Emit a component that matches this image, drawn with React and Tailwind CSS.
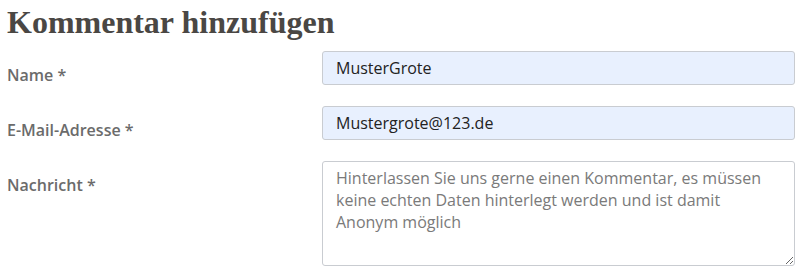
import {useState} from 'react';

const labelCls = "text-[16px] font-semibold text-[#6b6b6b] leading-none";
const fieldCls =
  "w-full rounded-[3px] border border-[#c9ccd1] px-[13px] text-[16px] text-[#222] outline-none";

const Field = ({label, children, top = false}) => (
  <div className={`flex ${top ? 'items-start' : 'items-center'}`}>
    <label className={`w-[322px] shrink-0 pl-[7px] ${labelCls} ${top ? 'pt-[16px]' : 'pt-[14px]'}`}>
      {label}
    </label>
    <div className="flex-1">{children}</div>
  </div>
);

const App = () => {
  const [name, setName] = useState('MusterGrote');
  const [mail, setMail] = useState('Mustergrote@123.de');

  return (
    <div className="w-[800px] h-[271px] bg-white pr-[5px] font-['Open_Sans',sans-serif]">
      <h2 className="pl-[7px] pt-[2px] text-[32px] font-bold leading-[40px] text-[#4a4744] font-['Liberation_Serif',serif]">
        Kommentar hinzufügen
      </h2>
      <div className="mt-[9px] flex flex-col gap-[21px]">
        <Field label="Name *">
          <input
            value={name}
            onChange={e => setName(e.target.value)}
            className={`${fieldCls} h-[34px] bg-[#e8f0fe]`}
          />
        </Field>
        <Field label="E-Mail-Adresse *">
          <input
            value={mail}
            onChange={e => setMail(e.target.value)}
            className={`${fieldCls} h-[34px] bg-[#e8f0fe]`}
          />
        </Field>
        <Field label="Nachricht *" top>
          <textarea
            placeholder="Hinterlassen Sie uns gerne einen Kommentar, es müssen keine echten Daten hinterlegt werden und ist damit Anonym möglich"
            className={`${fieldCls} block h-[105px] bg-white py-[5px] leading-[22px] placeholder:text-[#7a7a7a]`}
          />
        </Field>
      </div>
    </div>
  );
};

export default App;
